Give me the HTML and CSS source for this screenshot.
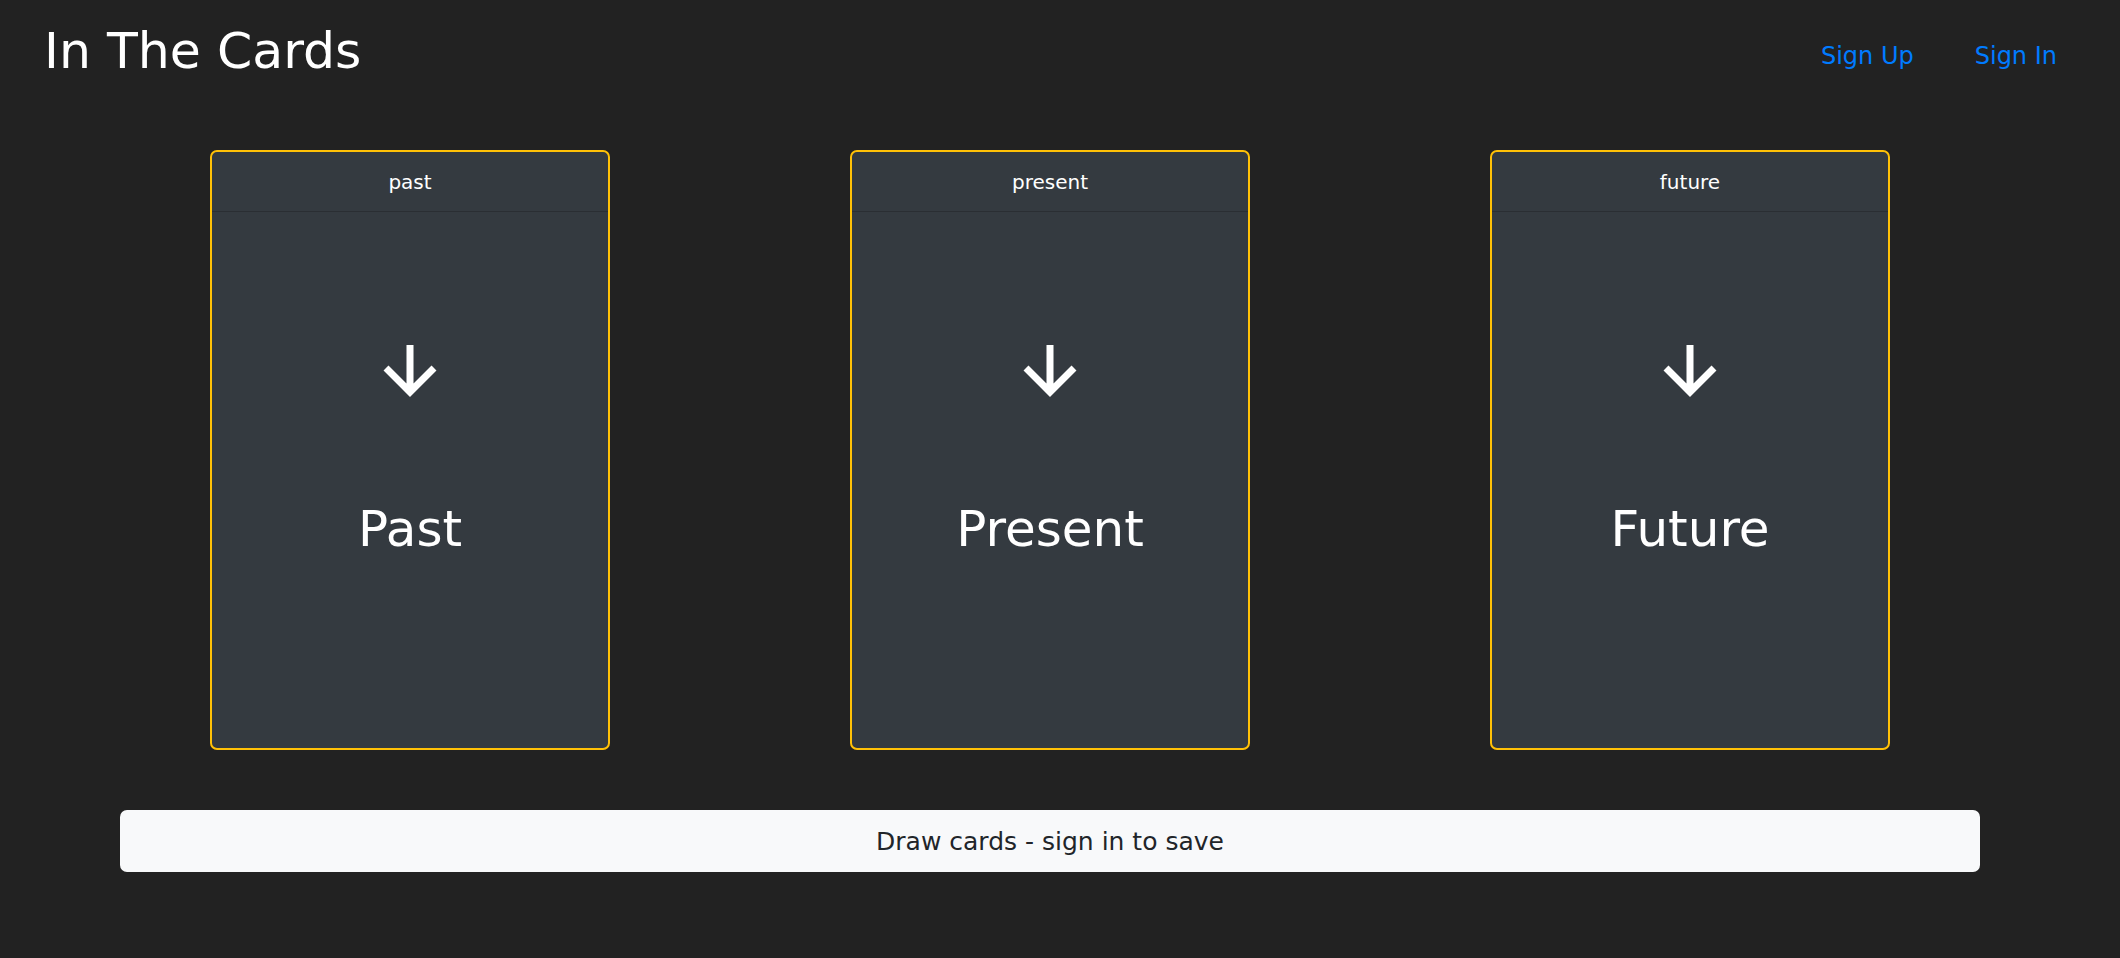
FILE: index.html
```html
<!DOCTYPE html>
<html lang="en">
<head>
<meta charset="utf-8">
<title>In The Cards</title>
<link rel="stylesheet" href="styles.css">
</head>
<body>
<header class="topbar">
  <h1 class="brand">In The Cards</h1>
  <nav class="nav">
    <a class="nav-link" href="#">Sign Up</a>
    <a class="nav-link" href="#">Sign In</a>
  </nav>
</header>
<main class="main">
  <div class="spread">
    <section class="card">
      <div class="card-header">past</div>
      <div class="card-body">
        <svg class="arrow" width="56" height="53" viewBox="0 0 56 53"><path d="M4 23 L28 47 L52 23 M28 0 V47" fill="none" stroke="#fff" stroke-width="7" stroke-linecap="butt" stroke-linejoin="miter"/></svg>
        <div class="card-title">Past</div>
      </div>
    </section>
    <section class="card">
      <div class="card-header">present</div>
      <div class="card-body">
        <svg class="arrow" width="56" height="53" viewBox="0 0 56 53"><path d="M4 23 L28 47 L52 23 M28 0 V47" fill="none" stroke="#fff" stroke-width="7" stroke-linecap="butt" stroke-linejoin="miter"/></svg>
        <div class="card-title">Present</div>
      </div>
    </section>
    <section class="card">
      <div class="card-header">future</div>
      <div class="card-body">
        <svg class="arrow" width="56" height="53" viewBox="0 0 56 53"><path d="M4 23 L28 47 L52 23 M28 0 V47" fill="none" stroke="#fff" stroke-width="7" stroke-linecap="butt" stroke-linejoin="miter"/></svg>
        <div class="card-title">Future</div>
      </div>
    </section>
  </div>
  <button class="draw" type="button">Draw cards - sign in to save</button>
</main>
</body>
</html>
```

FILE: styles.css
```css
html, body {
  margin: 0;
  padding: 0;
}
body {
  background: #222222;
  color: #ffffff;
  font-family: "DejaVu Sans", "Noto Sans", sans-serif;
  width: 2120px;
  height: 958px;
  overflow: hidden;
}
.topbar {
  display: flex;
  justify-content: space-between;
  align-items: flex-start;
  padding: 21px 63px 0 44px;
}
.brand {
  margin: 0;
  font-size: 50.5px;
  line-height: 60px;
  font-weight: normal;
  color: #ffffff;
}
.nav {
  display: flex;
  gap: 61px;
  margin-top: 17px;
}
.nav-link {
  color: #007bff;
  text-decoration: none;
  font-size: 24px;
  line-height: 36px;
}
.main {
  width: 1920px;
  margin: 69px 0 0 90px;
  display: flex;
  flex-direction: column;
}
.spread {
  display: grid;
  grid-template-columns: repeat(3, 640px);
  justify-items: center;
}
.card {
  box-sizing: border-box;
  width: 400px;
  height: 600px;
  background: #343a40;
  border: 2px solid #ffc107;
  border-radius: 7px;
  display: flex;
  flex-direction: column;
  overflow: hidden;
}
.card-header {
  height: 59px;
  border-bottom: 1px solid #2a2e33;
  display: flex;
  align-items: center;
  justify-content: center;
  font-size: 20px;
  line-height: 30px;
  color: #ffffff;
}
.card-body {
  flex: 1;
  display: flex;
  flex-direction: column;
  align-items: center;
  padding-top: 133px;
}
.arrow {
  display: block;
}
.card-title {
  margin-top: 101px;
  font-size: 50px;
  line-height: 60px;
  color: #ffffff;
}
.draw {
  margin: 60px 30px 0 30px;
  height: 62px;
  border: none;
  border-radius: 7px;
  background: #f8f9fa;
  color: #212529;
  font-family: "DejaVu Sans", "Noto Sans", sans-serif;
  font-size: 25px;
  line-height: 36px;
  padding: 1px 0 0 0;
}
```
